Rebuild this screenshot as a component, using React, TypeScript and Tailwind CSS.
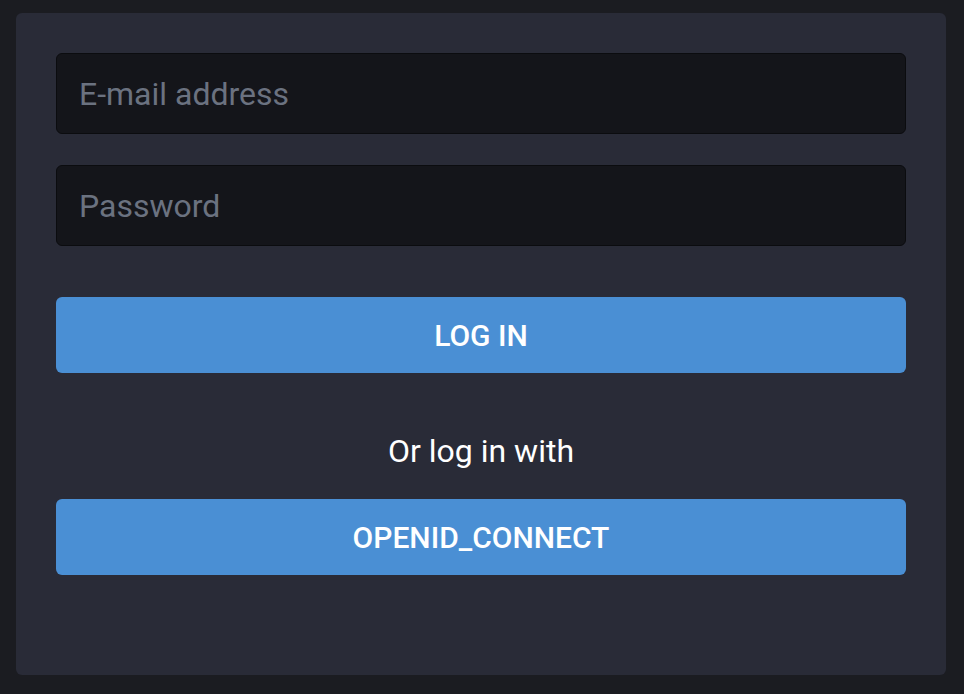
import React, { useState } from "react";

const App: React.FC = () => {
  const [email, setEmail] = useState("");
  const [password, setPassword] = useState("");

  return (
    <div className="min-h-screen w-full bg-[#1b1c21] pt-[13px] pl-4 pr-[18px] pb-[19px] font-['Roboto',sans-serif]">
      <div className="rounded-md bg-[#292b37] px-10 pt-10 pb-[100px]">
        <form className="flex flex-col" onSubmit={(e) => e.preventDefault()}>
          {/* Credentials */}
          <input
            type="email"
            placeholder="E-mail address"
            value={email}
            onChange={(e) => setEmail(e.target.value)}
            className="h-[81px] w-full rounded-md border border-[#0b0c0f] bg-[#14151a] px-[22px] text-[32px] text-white placeholder:text-[#6b7280] outline-none"
          />
          <input
            type="password"
            placeholder="Password"
            value={password}
            onChange={(e) => setPassword(e.target.value)}
            className="mt-[31px] h-[81px] w-full rounded-md border border-[#0b0c0f] bg-[#14151a] px-[22px] text-[32px] text-white placeholder:text-[#6b7280] outline-none"
          />

          <button
            type="submit"
            className="mt-[51px] h-[76px] w-full rounded-md bg-[#4a8fd4] text-[30px] font-medium text-white"
          >
            LOG IN
          </button>
        </form>

        <p className="mt-[58px] text-center text-[32px] leading-[40px] text-white">Or log in with</p>

        <button
          type="button"
          className="mt-[28px] h-[76px] w-full rounded-md bg-[#4a8fd4] text-[30px] font-medium text-white"
        >
          OPENID_CONNECT
        </button>
      </div>
    </div>
  );
};

export default App;
